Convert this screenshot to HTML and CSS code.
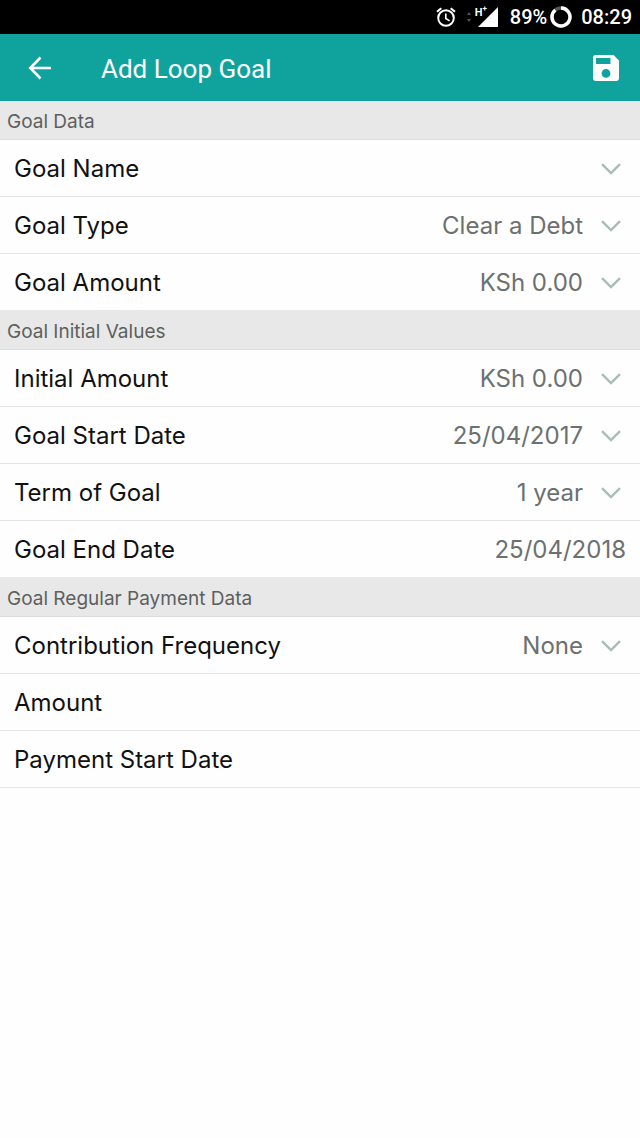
FILE: index.html
```html
<!DOCTYPE html>
<html lang="en">
<head>
  <meta charset="utf-8">
  <meta name="viewport" content="width=device-width, initial-scale=1">
  <title>Add Loop Goal</title>
  <link rel="stylesheet" href="styles.css">
</head>
<body>
  <svg class="symbols" width="0" height="0" aria-hidden="true">
    <symbol id="chevron" viewBox="0 0 20 12"><path d="M1 1.2 10 10l9-8.8" fill="none" stroke="currentColor" stroke-width="2.4"/></symbol>
  </svg>

  <div class="status">
    <svg class="status-alarm" viewBox="0 0 20 20" aria-hidden="true">
      <g fill="none" stroke="currentColor" stroke-width="2">
        <circle cx="10" cy="11" r="7.8"/>
        <path d="M1 4.8 5.3 1.2M19 4.8 14.7 1.2"/>
        <path d="M9.8 6.5v5l3.8 2.4" stroke-width="1.6"/>
      </g>
    </svg>
    <svg class="status-arrows" viewBox="0 0 6 10" aria-hidden="true"><path d="M3 0 5 3H1zM3 10 5 7H1z" fill="currentColor"/></svg>
    <span class="signal">
      <svg class="signal-bars" viewBox="0 0 20 20" aria-hidden="true"><path d="M20 0v20H0z" fill="currentColor"/></svg>
      <span class="signal-type">H<sup>+</sup></span>
    </span>
    <span class="battery">89%
      <svg class="battery-ring" viewBox="0 0 22 22" aria-hidden="true">
        <g fill="none" stroke-width="3.4">
          <circle cx="11" cy="11" r="9" stroke="#555"/>
          <path d="M11 2A9 9 0 1 1 5.3 4" stroke="currentColor"/>
        </g>
      </svg>
    </span>
    <time class="clock">08:29</time>
  </div>

  <header class="toolbar">
    <button class="tool" type="button" aria-label="Back">
      <svg class="arrow" viewBox="0 0 24 24" aria-hidden="true"><path d="M12.500 1.500 2.300 12l10.200 10.500M2.500 12H23" fill="none" stroke="currentColor" stroke-width="2.600"/></svg>
    </button>
    <h1 class="title">Add Loop Goal</h1>
    <button class="tool" type="submit" form="goal" aria-label="Save">
      <svg class="disk" viewBox="0 0 26 26" aria-hidden="true"><path fill="currentColor" fill-rule="evenodd" d="M3 0h17.5L26 5.500V23a3 3 0 0 1-3 3H3a3 3 0 0 1-3-3V3a3 3 0 0 1 3-3zM3 3v6h14.500V3zM13 14a4.400 4.400 0 1 0 0 8.800 4.400 4.400 0 0 0 0-8.800z"/></svg>
    </button>
  </header>

  <form id="goal" class="form">
    <section>
      <h2 class="heading">Goal Data</h2>
      <div class="row">
        <label class="label" for="name">Goal Name</label>
        <select class="value" id="name"><option></option></select>
        <svg class="chevron" aria-hidden="true"><use href="#chevron"/></svg>
      </div>
      <div class="row">
        <label class="label" for="type">Goal Type</label>
        <select class="value" id="type"><option>Clear a Debt</option></select>
        <svg class="chevron" aria-hidden="true"><use href="#chevron"/></svg>
      </div>
      <div class="row">
        <label class="label" for="goal-amount">Goal Amount</label>
        <select class="value" id="goal-amount"><option>KSh 0.00</option></select>
        <svg class="chevron" aria-hidden="true"><use href="#chevron"/></svg>
      </div>
    </section>

    <section>
      <h2 class="heading">Goal Initial Values</h2>
      <div class="row">
        <label class="label" for="initial">Initial Amount</label>
        <select class="value" id="initial"><option>KSh 0.00</option></select>
        <svg class="chevron" aria-hidden="true"><use href="#chevron"/></svg>
      </div>
      <div class="row">
        <label class="label" for="start">Goal Start Date</label>
        <select class="value" id="start"><option>25/04/2017</option></select>
        <svg class="chevron" aria-hidden="true"><use href="#chevron"/></svg>
      </div>
      <div class="row">
        <label class="label" for="term">Term of Goal</label>
        <select class="value" id="term"><option>1 year</option></select>
        <svg class="chevron" aria-hidden="true"><use href="#chevron"/></svg>
      </div>
      <div class="row">
        <label class="label" for="end">Goal End Date</label>
        <output class="value" id="end">25/04/2018</output>
      </div>
    </section>

    <section>
      <h2 class="heading">Goal Regular Payment Data</h2>
      <div class="row">
        <label class="label" for="frequency">Contribution Frequency</label>
        <select class="value" id="frequency"><option>None</option></select>
        <svg class="chevron" aria-hidden="true"><use href="#chevron"/></svg>
      </div>
      <div class="row">
        <label class="label" for="amount">Amount</label>
        <output class="value" id="amount"></output>
      </div>
      <div class="row">
        <label class="label" for="payment-start">Payment Start Date</label>
        <output class="value" id="payment-start"></output>
      </div>
    </section>
  </form>
</body>
</html>
```
FILE: styles.css
```css
* {
  box-sizing: border-box;
}

body {
  margin: 0;
  background: #fefefe;
  color: #111;
  font-family: Inter, "Noto Sans", sans-serif;
}

.symbols {
  position: absolute;
}

.status {
  display: flex;
  align-items: center;
  justify-content: flex-end;
  height: 34px;
  padding: 0 8px;
  background: #000;
  color: #fff;
  font-family: Roboto, sans-serif;
  font-size: 20px;
  font-weight: 500;
}

.status-alarm {
  width: 20px;
  height: 20px;
  margin-right: 10px;
}

.status-arrows {
  width: 6px;
  height: 10px;
  color: #555;
}

.signal {
  position: relative;
  display: flex;
  justify-content: flex-end;
  width: 26px;
  margin-right: 12px;
}

.signal-bars {
  width: 20px;
  height: 20px;
}

.signal-type {
  position: absolute;
  top: 0;
  left: 3px;
  font-size: 11px;
  font-weight: 700;
  line-height: 11px;
}

.signal-type sup {
  font-size: 8px;
  line-height: 0;
}

.battery {
  display: flex;
  align-items: center;
  gap: 3px;
  margin-right: 9px;
}

.battery-ring {
  width: 22px;
  height: 22px;
}

.toolbar {
  display: flex;
  align-items: center;
  height: 67px;
  padding: 0 10px 0 16px;
  background: #10a39e;
  color: #fff;
}

.tool {
  display: grid;
  place-items: center;
  width: 48px;
  height: 48px;
  padding: 0;
  border: 0;
  background: none;
  color: inherit;
}

.arrow {
  width: 24px;
  height: 24px;
}

.disk {
  width: 26px;
  height: 26px;
}

.title {
  flex: 1;
  margin: 0;
  padding: 2px 0 0 37px;
  font: 400 26px/32px Roboto, sans-serif;
}

.heading {
  margin: 0;
  padding: 3px 7px 0;
  border-bottom: 1px solid #dcdcdc;
  background: #e8e8e8;
  color: #5c605f;
  font-size: 19px;
  font-weight: 400;
  line-height: 35px;
}

.row {
  display: flex;
  align-items: center;
  height: 57px;
  padding: 1px 14px 0;
  border-bottom: 1px solid #e4e4e4;
}

.row:last-child {
  border-bottom-color: #e8e8e8;
}

.label {
  font-size: 24px;
  line-height: 32px;
}

.value {
  flex: 1;
  min-width: 0;
  padding: 0;
  border: 0;
  appearance: none;
  background: none;
  color: #6c706f;
  font: inherit;
  font-size: 24px;
  line-height: 32px;
  text-align: right;
  text-align-last: right;
}

.chevron {
  width: 20px;
  height: 12px;
  margin: 0 5px 0 18px;
  color: #a9bcb9;
}
```
